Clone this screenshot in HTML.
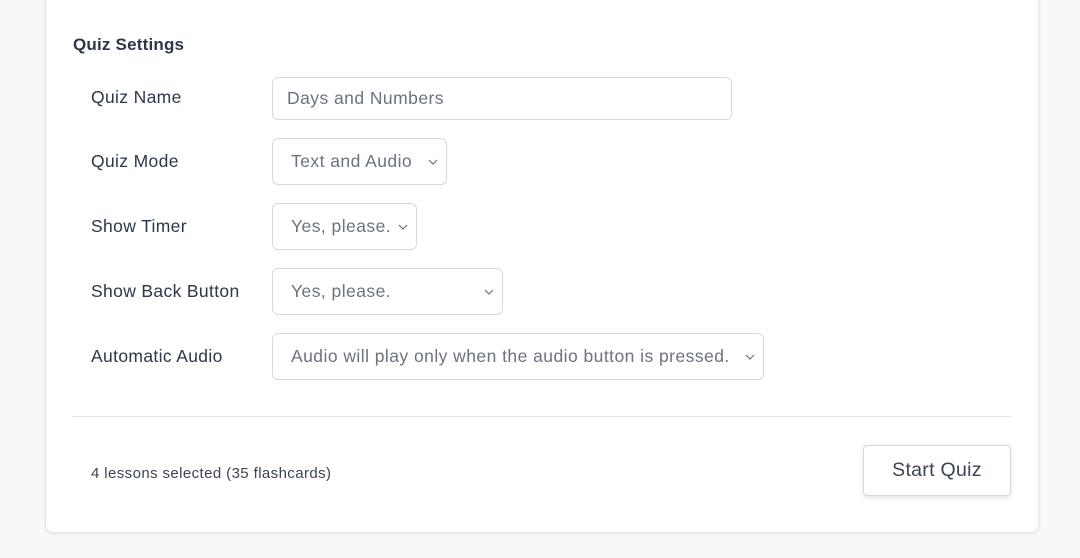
<!DOCTYPE html>
<html><head><meta charset="utf-8"><style>
*{box-sizing:border-box;margin:0;padding:0}
body{width:1080px;height:558px;background:#f7f8fa;font-family:"Liberation Sans",sans-serif;position:relative;overflow:hidden}
.card{position:absolute;left:45px;top:-10px;width:994px;height:543px;background:#fff;border:1px solid #e5e7eb;border-radius:8px;box-shadow:0 1px 3px rgba(0,0,0,.08)}
.a{position:absolute}
h2{position:absolute;left:73px;top:35px;font-size:17px;font-weight:bold;color:#2d3748;letter-spacing:0.2px}
.lbl{position:absolute;left:91px;font-size:17.5px;color:#2d3748;letter-spacing:0.35px}
.f{position:absolute;left:272px;border:1px solid #d6d9e0;border-radius:6px;background:#fff;color:#6b7280;font-size:17.5px;letter-spacing:0.45px;display:flex;align-items:center;padding-left:18px}
.f svg{position:absolute;right:8px;top:50%;margin-top:-3px}
.hr{position:absolute;left:72px;top:416px;width:939px;height:1px;background:#e2e5ea}
.btn{position:absolute;left:863px;top:445px;width:148px;height:51px;border:1px solid #d6d9e0;border-radius:4px;background:#fff;box-shadow:0 2px 4px rgba(0,0,0,.1);font-size:19.5px;color:#3a4454;display:flex;align-items:center;justify-content:center;letter-spacing:0.3px}
</style></head><body>
<div class="card"></div>
<h2>Quiz Settings</h2>
<div class="lbl" style="top:87px">Quiz Name</div>
<div class="f" style="top:77px;width:460px;height:43px;padding-left:14px">Days and Numbers</div>
<div class="lbl" style="top:151px">Quiz Mode</div>
<div class="f" style="top:138px;width:175px;height:47px">Text and Audio<svg width="10" height="6"><path d="M1 1l4 4 4-4" fill="none" stroke="#6b7280" stroke-width="1.2"/></svg></div>
<div class="lbl" style="top:216px">Show Timer</div>
<div class="f" style="top:203px;width:145px;height:47px">Yes, please.<svg width="10" height="6"><path d="M1 1l4 4 4-4" fill="none" stroke="#6b7280" stroke-width="1.2"/></svg></div>
<div class="lbl" style="top:281px">Show Back Button</div>
<div class="f" style="top:268px;width:231px;height:47px">Yes, please.<svg width="10" height="6"><path d="M1 1l4 4 4-4" fill="none" stroke="#6b7280" stroke-width="1.2"/></svg></div>
<div class="lbl" style="top:346px">Automatic Audio</div>
<div class="f" style="top:333px;width:492px;height:47px">Audio will play only when the audio button is pressed.<svg width="10" height="6"><path d="M1 1l4 4 4-4" fill="none" stroke="#6b7280" stroke-width="1.2"/></svg></div>
<div class="hr"></div>
<div class="a" style="left:91px;top:465px;font-size:15px;color:#3a4454;letter-spacing:0.4px">4 lessons selected (35 flashcards)</div>
<div class="btn">Start Quiz</div>
</body></html>
